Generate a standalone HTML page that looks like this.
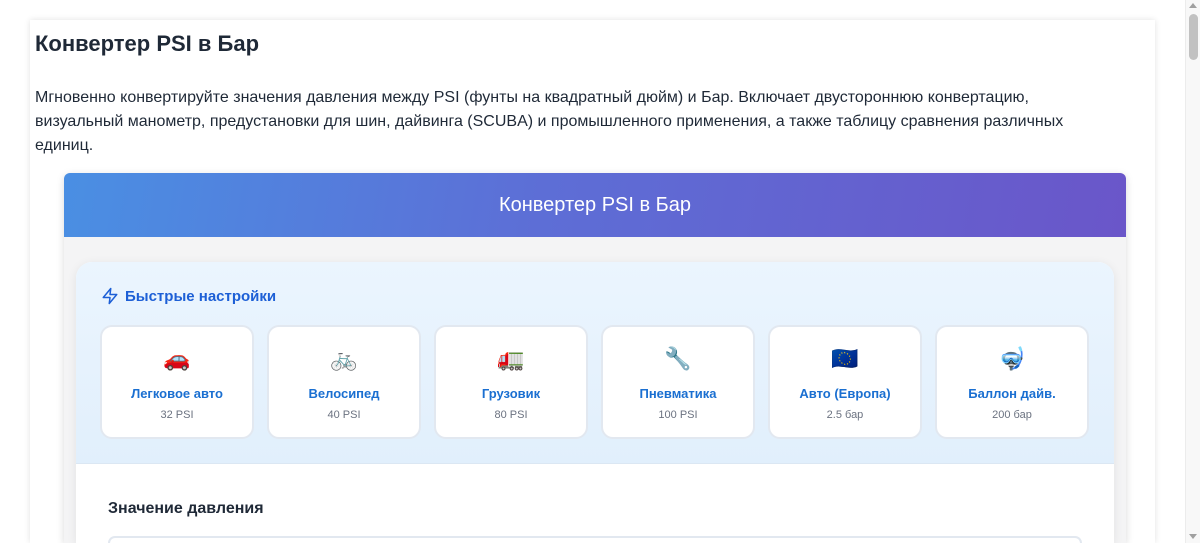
<!DOCTYPE html>
<html><head><meta charset="utf-8"><style>
*{box-sizing:border-box;margin:0;padding:0}
html,body{width:1200px;height:543px;overflow:hidden}
body{background:#fff;font-family:"Liberation Sans","DejaVu Sans",sans-serif;color:#1f2937;position:relative}
.sb{position:absolute;right:0;top:0;width:15px;height:543px;background:#f8f8f8;border-left:1px solid #ececec}
.sb .th{position:absolute;left:3px;top:14px;width:9px;height:46px;background:#c1c1c1;border-radius:5px}
.sb .up{position:absolute;left:3px;top:3px;border:4px solid transparent;border-bottom:5px solid #a0a0a0;border-top:0}
.sb .dn{position:absolute;left:3px;bottom:4px;border:4px solid transparent;border-top:5px solid #a0a0a0;border-bottom:0}
.outer{position:absolute;left:30px;top:20px;width:1125px;height:523px;background:#fff;box-shadow:0 0 6px rgba(0,0,0,.12)}
h1{position:absolute;left:35px;top:31px;font-size:22px;font-weight:600;color:#1f2937}
p.d{position:absolute;left:35px;top:86px;width:1110px;font-size:16px;line-height:24px;color:#1f2937;white-space:nowrap}
.tool{position:absolute;left:64px;top:173px;width:1062px;height:370px;background:#f4f4f5;border-radius:6px 6px 0 0;box-shadow:0 2px 8px rgba(0,0,0,.15);overflow:hidden}
.hdr{height:64px;background:linear-gradient(100deg,#4a8fe3,#5d6ed6 45%,#6a56c9);color:#fff;font-size:20px;text-align:center;line-height:64px}
.card{position:absolute;left:12px;top:89px;width:1038px;height:281px;background:#fff;border-radius:16px 16px 0 0;box-shadow:0 2px 10px rgba(0,0,0,.08);overflow:hidden}
.qs{height:202px;background:linear-gradient(180deg,#ebf5fe,#e1effc);border-bottom:1px solid #dbe7f3;position:relative}
.qt{position:absolute;left:25px;top:25px;font-size:15px;font-weight:bold;color:#1d5fd6;display:flex;align-items:center;gap:6px}
.p{position:absolute;top:63px;width:154px;height:114px;background:#fff;border:2px solid #e2e8f0;border-radius:12px;text-align:center}
.p .e{font-size:22px;margin-top:18px;height:30px;line-height:30px;font-family:"Noto Color Emoji","DejaVu Sans",sans-serif}
.p .n{font-size:13px;font-weight:bold;color:#1a6fd1;margin-top:11px}
.p .v{font-size:11px;color:#6b7280;margin-top:8px}
.lab{position:absolute;left:32px;top:238px;font-size:16px;font-weight:600;color:#1f2937}
.inp{position:absolute;left:32px;top:274px;width:974px;height:7px;border:2px solid #e2e8f0;border-bottom:0;border-radius:10px 10px 0 0}
</style></head><body>
<div class="outer"></div>
<h1>Конвертер PSI в Бар</h1>
<p class="d">Мгновенно конвертируйте значения давления между PSI (фунты на квадратный дюйм) и Бар. Включает двустороннюю конвертацию,<br>визуальный манометр, предустановки для шин, дайвинга (SCUBA) и промышленного применения, а также таблицу сравнения различных<br>единиц.</p>
<div class="tool">
<div class="hdr">Конвертер PSI в Бар</div>
<div class="card">
<div class="qs">
<div class="qt"><svg width="18" height="18" viewBox="0 0 24 24" fill="none" stroke="#1d5fd6" stroke-width="2" stroke-linejoin="round"><path d="M13 2L3 14h9l-1 8 10-12h-9l1-8z"/></svg>Быстрые настройки</div>
<div class="p" style="left:24px"><div class="e">🚗</div><div class="n">Легковое авто</div><div class="v">32 PSI</div></div>
<div class="p" style="left:191px"><div class="e">🚲</div><div class="n">Велосипед</div><div class="v">40 PSI</div></div>
<div class="p" style="left:358px"><div class="e">🚛</div><div class="n">Грузовик</div><div class="v">80 PSI</div></div>
<div class="p" style="left:525px"><div class="e">🔧</div><div class="n">Пневматика</div><div class="v">100 PSI</div></div>
<div class="p" style="left:692px"><div class="e">🇪🇺</div><div class="n">Авто (Европа)</div><div class="v">2.5 бар</div></div>
<div class="p" style="left:859px"><div class="e">🤿</div><div class="n">Баллон дайв.</div><div class="v">200 бар</div></div>
</div>
<div class="lab">Значение давления</div>
<div class="inp"></div>
</div>
</div>
<div class="sb"><div class="up"></div><div class="th"></div><div class="dn"></div></div>
</body></html>
